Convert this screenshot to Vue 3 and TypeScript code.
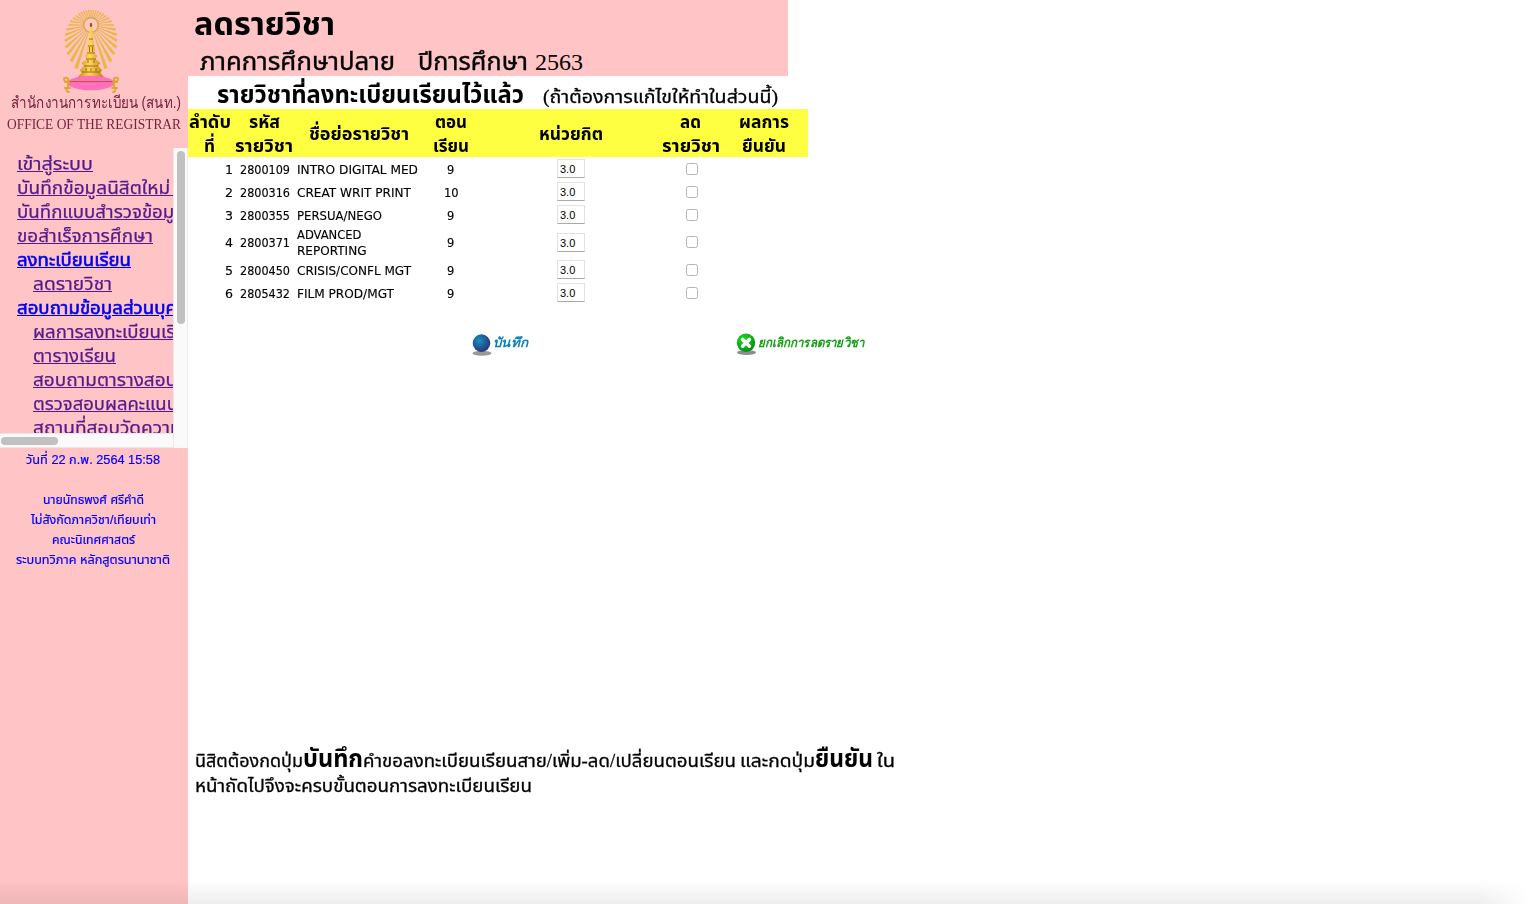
<script setup lang="ts">
import type { Directive } from 'vue'

interface MenuItem { label: string; width: number; sub?: boolean; active?: boolean }
interface Course { code: string; name: string[]; widths: number[]; section: string; credit: string }
interface Heading { lines: string[]; widths: number[] }

// Sets a line of text to a fixed advance width, whichever font is installed.
const vFit: Directive<HTMLElement, number> = {
  mounted(el, { value }) {
    const natural = el.getBoundingClientRect().width
    if (!natural) return
    el.style.transform = `scaleX(${value / natural})`
    el.style.marginRight = `${value - natural}px`
  },
}

const menu: MenuItem[] = [
  { label: 'เข้าสู่ระบบ', width: 76 },
  { label: 'บันทึกข้อมูลนิสิตใหม่ ', width: 158 },
  { label: 'บันทึกแบบสำรวจข้อมูล', width: 168 },
  { label: 'ขอสำเร็จการศึกษา', width: 136 },
  { label: 'ลงทะเบียนเรียน', width: 114, active: true },
  { label: 'ลดรายวิชา', width: 79, sub: true },
  { label: 'สอบถามข้อมูลส่วนบุคคล', width: 182, active: true },
  { label: 'ผลการลงทะเบียนเรียน', width: 165, sub: true },
  { label: 'ตารางเรียน', width: 83, sub: true },
  { label: 'สอบถามตารางสอบ', width: 144, sub: true },
  { label: 'ตรวจสอบผลคะแนน', width: 145, sub: true },
  { label: 'สถานที่สอบวัดความรู้', width: 158, sub: true },
]

const headings: Heading[] = [
  { lines: ['ลำดับ', 'ที่'], widths: [42, 11] },
  { lines: ['รหัส', 'รายวิชา'], widths: [31, 58] },
  { lines: ['ชื่อย่อรายวิชา'], widths: [100] },
  { lines: ['ตอน', 'เรียน'], widths: [32, 36] },
  { lines: ['หน่วยกิต'], widths: [64] },
  { lines: ['ลด', 'รายวิชา'], widths: [21, 58] },
  { lines: ['ผลการ', 'ยืนยัน'], widths: [50, 44] },
]

const courses: Course[] = [
  { code: '2800109', name: ['INTRO DIGITAL MED'], widths: [121], section: '9', credit: '3.0' },
  { code: '2800316', name: ['CREAT WRIT PRINT'], widths: [114], section: '10', credit: '3.0' },
  { code: '2800355', name: ['PERSUA/NEGO'], widths: [85], section: '9', credit: '3.0' },
  { code: '2800371', name: ['ADVANCED', 'REPORTING'], widths: [64.5, 69.5], section: '9', credit: '3.0' },
  { code: '2800450', name: ['CRISIS/CONFL MGT'], widths: [114], section: '9', credit: '3.0' },
  { code: '2805432', name: ['FILM PROD/MGT'], widths: [97], section: '9', credit: '3.0' },
]

const info = [
  { text: 'นายนัทธพงศ์ ศรีคำดี', width: 101 },
  { text: 'ไม่สังกัดภาควิชา/เทียบเท่า', width: 125 },
  { text: 'คณะนิเทศศาสตร์', width: 83 },
  { text: 'ระบบทวิภาค หลักสูตรนานาชาติ', width: 154 },
]

// Rays around the finial: short on top, long towards the cushion.
const rays = Array.from({ length: 33 }, (_, i) => {
  const deg = -160 + (320 * i) / 32
  const a = (deg * Math.PI) / 180
  const t = Math.abs(deg) / 160
  const r = 15 + 31 * Math.pow(t, 2.2)
  const p = (ang: number, d: number) => `${(31 + Math.sin(ang) * d * 0.95).toFixed(2)},${(19 - Math.cos(ang) * d).toFixed(2)}`
  return `${p(a, 6.5)} ${p(a - 0.035, r)} ${p(a + 0.035, r)}`
})
</script>

<template>
  <div class="page">
    <aside class="side">
      <header class="brand">
        <svg class="emblem" width="62" height="90" viewBox="0 0 62 90">
          <defs>
            <linearGradient id="gold" x1="0" x2="1">
              <stop offset="0" stop-color="#c98a14" />
              <stop offset=".45" stop-color="#ffd95a" />
              <stop offset="1" stop-color="#bd7c10" />
            </linearGradient>
          </defs>
          <polygon v-for="(r, i) in rays" :key="i" :points="r" fill="#ecb93c" stroke="#e2ab30" stroke-width=".3" />
          <circle cx="31" cy="19" r="7.4" fill="none" stroke="#dba95a" stroke-width="1.6" />
          <circle cx="31" cy="19" r="6.3" fill="#ffc8c4" />
          <path d="M31 18 L32.2 21 L33 29 L34 38 L35.3 43 L34.6 47 L37.5 50 L35.5 53 L40.5 57 L38 60 L42 64 L40.5 67 L44 71 L18 71 L21.5 67 L20 64 L24 60 L21.5 57 L26.5 53 L24.5 50 L27.4 47 L26.7 43 L28 38 L29 29 L30 21 Z" fill="url(#gold)" />
          <path d="M29 33h4M28 40h6M27 47h8M26 53h10M24 60h14M22 66h18M29.5 41v5M32.5 41v5M28 54v3M34 54v3M26 62v3M31 62v3M36 62v3" stroke="#8d5006" stroke-width=".8" fill="none" />
          <rect x="29.8" y="17" width="2.4" height="4" rx="1" fill="#a65b13" />
          <ellipse cx="31" cy="77" rx="23.5" ry="7.2" fill="#ff6fbb" />
          <path d="M7 75.6 H55" stroke="#a9572f" stroke-width=".9" />
          <path d="M4 72.5c2-2 5 0 4 2s-4 1-4-1M5 76h4M8 75v6M5 82h5M7 82c-1 2 0 4 2 4M58 72.5c-2-2-5 0-4 2s4 1 4-1M57 76h-4M54 75v6M57 82h-5M55 82c1 2 0 4-2 4" fill="none" stroke="#dfa42a" stroke-width="1.8" stroke-linecap="round" />
        </svg>
        <div class="brand-th"><span v-fit="170" class="fit">สำนักงานการทะเบียน (สนท.)</span></div>
        <div class="brand-en"><span v-fit="174" class="fit">OFFICE OF THE REGISTRAR</span></div>
      </header>

      <div class="menu-frame">
        <nav class="menu">
          <div v-for="m in menu" :key="m.label" class="menu-row" :class="{ sub: m.sub }">
            <a v-fit="m.width" class="fit" :class="{ active: m.active }">{{ m.label }}</a>
          </div>
        </nav>
        <div class="bar-v"><div class="thumb-v"></div></div>
        <div class="bar-h"><div class="thumb-h"></div></div>
      </div>

      <section class="info">
        <p class="date"><span v-fit="134" class="fit">วันที่ 22 ก.พ. 2564 15:58</span></p>
        <p v-for="l in info" :key="l.text"><span v-fit="l.width" class="fit">{{ l.text }}</span></p>
      </section>
    </aside>

    <main class="main">
      <header class="banner">
        <h1><span v-fit="141" class="fit">ลดรายวิชา</span></h1>
        <div class="term">
          <span v-fit="195" class="fit">ภาคการศึกษาปลาย</span>
          <span class="year"><span v-fit="110" class="fit">ปีการศึกษา</span><span v-fit="48" class="fit digits">2563</span></span>
        </div>
      </header>

      <div class="caption">
        <b v-fit="307" class="fit">รายวิชาที่ลงทะเบียนเรียนไว้แล้ว</b>
        <span v-fit="235" class="fit">(ถ้าต้องการแก้ไขให้ทำในส่วนนี้)</span>
      </div>

      <div class="row head">
        <div v-for="h in headings" :key="h.lines.join()" class="head-cell">
          <div v-for="(l, i) in h.lines" :key="l"><span v-fit="h.widths[i]" class="fit">{{ l }}</span></div>
        </div>
      </div>
      <div v-for="(c, n) in courses" :key="c.code" class="row course" :class="{ tall: c.name.length > 1 }">
        <div class="cell num"><span v-fit="8" class="fit">{{ n + 1 }}</span></div>
        <div class="cell code"><span v-fit="50" class="fit">{{ c.code }}</span></div>
        <div class="cell name">
          <div v-for="(l, i) in c.name" :key="l"><span v-fit="c.widths[i]" class="fit">{{ l }}</span></div>
        </div>
        <div class="cell mid"><span v-fit="c.section.length * 7.3" class="fit">{{ c.section }}</span></div>
        <div class="mid"><div class="credit">{{ c.credit }}</div></div>
        <div class="mid"><div class="check"></div></div>
      </div>

      <div class="actions">
        <div class="action save">
          <svg width="22" height="24" viewBox="0 0 22 24">
            <defs>
              <radialGradient id="ball" cx=".38" cy=".36" r=".65">
                <stop offset="0" stop-color="#1595b5" />
                <stop offset=".55" stop-color="#245c9a" />
                <stop offset="1" stop-color="#253878" />
              </radialGradient>
            </defs>
            <ellipse cx="10" cy="20.3" rx="9.5" ry="2.5" fill="#999" />
            <circle cx="9.5" cy="10.1" r="8.8" fill="url(#ball)" />
          </svg>
          <span v-fit="35" class="fit">บันทึก</span>
        </div>
        <div class="action cancel">
          <svg width="22" height="24" viewBox="0 0 22 24">
            <defs>
              <radialGradient id="leaf" cx=".4" cy=".35" r=".65">
                <stop offset="0" stop-color="#24dc2c" />
                <stop offset=".6" stop-color="#08b711" />
                <stop offset="1" stop-color="#078c12" />
              </radialGradient>
            </defs>
            <ellipse cx="10.5" cy="19.6" rx="9.5" ry="2.5" fill="#8c8c8c" />
            <circle cx="10" cy="9.8" r="9.2" fill="url(#leaf)" />
            <path d="M6.6 6.4L13.4 13.2M13.4 6.4L6.6 13.2" stroke="#fff" stroke-width="3.6" stroke-linecap="round" />
          </svg>
          <span v-fit="106" class="fit">ยกเลิกการลดรายวิชา</span>
        </div>
      </div>

      <div class="note">
        <div class="note-line"><span v-fit="108" class="fit">นิสิตต้องกดปุ่ม</span><b v-fit="60" class="fit">บันทึก</b><span v-fit="373" class="fit">คำขอลงทะเบียนเรียนสาย/เพิ่ม-ลด/เปลี่ยนตอนเรียน</span><span v-fit="75" class="fit last">และกดปุ่ม</span><b v-fit="58" class="fit">ยืนยัน</b><span v-fit="18" class="fit last">ใน</span></div>
        <div class="note-line"><span v-fit="337" class="fit">หน้าถัดไปจึงจะครบขั้นตอนการลงทะเบียนเรียน</span></div>
      </div>
    </main>
    <div class="shade"></div>
  </div>
</template>

<style>
body { margin: 0; background: #fff; }
</style>

<style scoped>
.page {
  position: relative;
  display: flex;
  width: 1536px;
  height: 904px;
  overflow: hidden;
  font-family: "Liberation Serif", "Noto Sans Thai", "Noto Serif Thai", serif;
  color: #000;
}
.fit { display: inline-block; white-space: pre; transform-origin: 0 50%; }
.side { width: 188px; height: 904px; background: #ffc4c5; flex: none; }
.brand { height: 148px; overflow: hidden; }
.emblem { display: block; margin: 6px 0 0 60px; }
.brand-th { margin: -4px 0 0 11px; height: 22px; font-size: 16px; line-height: 22px; color: #77213f; font-family: "Liberation Sans", sans-serif; }
.brand-en { margin-left: 7px; height: 20px; font-size: 15px; line-height: 20px; color: #77213f; }

.menu-frame {
  display: grid;
  grid-template: 285px 15px / 173px 15px;
  height: 300px;
}
.menu { overflow: hidden; padding-top: 4px; box-sizing: border-box; font-size: 18px; -webkit-text-stroke: .25px; }
.menu-row { height: 24px; line-height: 24px; padding-left: 17px; white-space: nowrap; }
.menu-row.sub { padding-left: 33px; }
.menu a { color: #551a8b; text-decoration: underline; }
.menu a.active { color: #00e; -webkit-text-stroke: .6px; }
.bar-v { grid-row: 1 / 3; grid-column: 2; background: #fafafa; border-left: 1px solid #e8e8e8; border-right: 1px solid #ededed; box-sizing: border-box; }
.thumb-v { width: 8px; height: 173px; margin: 3px 0 0 3px; border-radius: 4px; background: #c1c1c1; }
.bar-h { grid-row: 2; grid-column: 1; background: #fafafa; border-top: 1px solid #e8e8e8; border-bottom: 1px solid #e8e8e8; box-sizing: border-box; }
.thumb-h { width: 57px; height: 8px; margin: 3px 0 0 1px; border-radius: 4px; background: #c1c1c1; }

.info { padding-top: 2px; text-align: center; color: #00f; font: 12px/20px "Liberation Sans", "Noto Sans Thai", sans-serif; -webkit-text-stroke: .2px; }
.info p { margin: 0; height: 20px; white-space: nowrap; padding-right: 2px; }
.info .date { margin-bottom: 20px; font-size: 13px; }

.main { width: 800px; }
.banner { width: 600px; height: 76px; background: #ffc4c5; overflow: hidden; }
h1 { margin: 0 0 0 6px; height: 46px; font-size: 32px; line-height: 48px; }
.term { display: flex; gap: 23px; margin-left: 12px; height: 30px; font-size: 24px; line-height: 32px; -webkit-text-stroke: .35px; }
.year { display: flex; gap: 7px; }
.digits { -webkit-text-stroke: 0; }
.caption { display: flex; align-items: baseline; gap: 19px; height: 33px; padding-left: 29px; line-height: 39px; font-size: 18px; }
.caption span { -webkit-text-stroke: .3px; }
.caption b { font-size: 24px; }
.row { display: grid; grid-template-columns: 44px 65px 124px 60px 180px 60px 87px; width: 620px; }
.head { height: 48px; background: #ffff42; font-size: 18px; font-weight: bold; }
.head-cell { display: flex; flex-direction: column; justify-content: center; text-align: center; line-height: 26px; white-space: nowrap; margin-left: -.5px; margin-right: .5px; }
.head-cell > div { height: 24px; }
.course { height: 23px; align-items: center; font: 12.5px/16px "DejaVu Sans", sans-serif; }
.course.tall { height: 32px; }
.cell { padding-top: 2px; -webkit-text-stroke: .15px; }
.tall .name { padding-top: 1px; margin-bottom: -1px; }
.num { text-align: right; margin-right: -1px; }
.code { padding-left: 8px; }
.name > div { height: 16px; white-space: nowrap; }
.mid { display: flex; justify-content: center; }
.credit { width: 28px; height: 19px; box-sizing: border-box; border: 1px solid #e2e2e2; border-bottom-color: #aaa; padding-left: 2px; font: 11px/19px "Liberation Sans", sans-serif; }
.check { width: 12px; height: 12px; box-sizing: border-box; margin-left: 2px; border: 1px solid #b5b5b5; border-radius: 2.5px; }

.actions { display: flex; margin-top: 29px; padding-left: 284px; height: 26px; }
.action { display: flex; font: italic bold 13px/20px "Liberation Serif", serif; white-space: nowrap; }
.save { width: 264px; color: #0b7fb8; }
.save .fit { margin-left: -1px; }
.cancel { color: #12a012; }

.note { margin: 385px 0 0 7px; font-size: 18px; }
.note-line { display: flex; align-items: baseline; height: 26px; line-height: 31px; white-space: nowrap; }
.note-line span { -webkit-text-stroke: .3px; }
.note-line + .note-line { padding-top: 1px; }
.note-line b { font-size: 24px; }
.note-line .last { margin-left: 4px; }
.shade { position: absolute; left: 0; right: 0; bottom: 0; height: 24px; background: linear-gradient(to bottom, rgba(0, 0, 0, 0), rgba(0, 0, 0, .065)); mask-image: linear-gradient(to right, #000 1480px, transparent 1530px); pointer-events: none; }
</style>
